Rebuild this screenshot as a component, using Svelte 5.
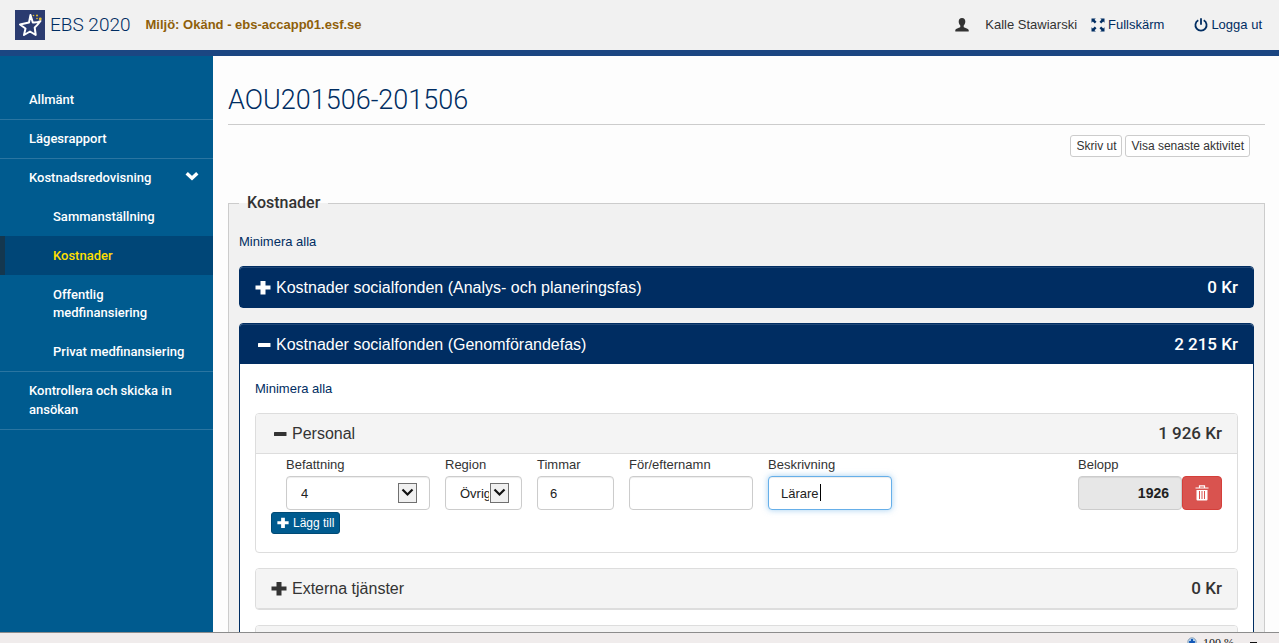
<script>
  const amounts = { analysis: '0 Kr', execution: '2 215 Kr', staff: '1 926 Kr', external: '0 Kr' };
  let position = $state('4');
  let region = $state('Övrigt');
  let hours = $state('6');
  let name = $state('');
  let description = $state('Lärare');
</script>

{#snippet plus()}
  <svg class="sign" viewBox="0 0 16 16" aria-hidden="true"><path d="M5.500 1h5v4.500H15.500v4H10.500V14.500h-5v-5H0.500v-4h5z" fill="currentColor" /></svg>
{/snippet}
{#snippet minus()}
  <svg class="sign" viewBox="0 0 16 16" aria-hidden="true"><rect x="3" y="6" width="12.500" height="4" rx=".5" fill="currentColor" /></svg>
{/snippet}
{#snippet arrow()}
  <svg class="arrow" viewBox="0 0 19 20" aria-hidden="true">
    <rect x=".5" y=".5" width="18" height="19" fill="#f0f0f0" stroke="#707070" />
    <path d="M4.500 6.500l5 5 5-5" fill="none" stroke="#111" stroke-width="2.200" />
  </svg>
{/snippet}

<div class="app">
  <header>
    <a class="brand" href="#start">
      <svg class="logo" viewBox="0 0 30 30" aria-hidden="true">
        <rect width="30" height="30" fill="#2b3b70" />
        <path d="M14 12.500L15.500 5l2.300 7.500q4.500.3 7.700-1.500-2.500 3.500-5.800 6.500l1 7.500-5.700-3.500L9 25l1.500-6.500L5 14.500z" fill="none" stroke="#fff" stroke-width="2" stroke-linejoin="round" />
        <g fill="#e8c22e"><circle cx="18.500" cy="5.500" r=".8" /><circle cx="22" cy="5.500" r="1" /><circle cx="25.300" cy="9" r="1.400" /><circle cx="22" cy="8.500" r=".8" /></g>
      </svg>
      <span>EBS 2020</span>
    </a>
    <strong class="env">Miljö: Okänd - ebs-accapp01.esf.se</strong>
    <div class="user">
      <svg class="person" viewBox="0 0 14 14" aria-hidden="true"><path d="M7 0c2.200 0 3.400 1.500 3.300 3.600 0 1.700-.7 3.200-1.600 4v1.500c0 .5 4.600 1.500 5 3V13.500H.3v-1.400c.4-1.500 5-2.500 5-3V7.600c-.9-.8-1.600-2.300-1.600-4C3.700 1.500 4.800 0 7 0z" fill="#333" /></svg>
      <span>Kalle Stawiarski</span>
    </div>
    <a class="tool full" href="#fullscreen">
      <svg viewBox="0 0 14 14" aria-hidden="true"><path d="M.5.500h4.300L3.500 1.800 5.500 3.800 3.800 5.500 1.800 3.500.500 4.800zM13.500.500v4.300l-1.300-1.300-2 2L8.500 3.800l2-2L9.200.500zM.500 13.500V9.200l1.300 1.300 2-2 1.700 1.700-2 2 1.300 1.300zM13.500 13.500H9.200l1.300-1.300-2-2 1.700-1.700 2 2 1.300-1.300z" fill="currentColor" /></svg>
      Fullskärm
    </a>
    <a class="tool" href="#logout">
      <svg viewBox="0 0 14 14" aria-hidden="true"><path d="M4.300 2.200a5.600 5.600 0 1 0 5.400 0" fill="none" stroke="currentColor" stroke-width="1.800" /><path d="M7 .3v6.500" stroke="currentColor" stroke-width="1.800" /></svg>
      Logga ut
    </a>
  </header>

  <div class="columns">
    <nav>
      <ul>
        <li><a href="#general">Allmänt</a></li>
        <li><a href="#report">Lägesrapport</a></li>
        <li>
          <a class="parent" href="#costs">
            Kostnadsredovisning
            <svg viewBox="0 0 14 10" aria-hidden="true"><path d="M1.700 2.200L7 7.200l5.300-5" fill="none" stroke="#fff" stroke-width="3.400" /></svg>
          </a>
          <ul class="sub">
            <li><a href="#summary">Sammanställning</a></li>
            <li><a class="active" href="#expenses">Kostnader</a></li>
            <li><a href="#public">Offentlig medfinansiering</a></li>
            <li><a href="#private">Privat medfinansiering</a></li>
          </ul>
        </li>
        <li><a href="#send">Kontrollera och skicka in ansökan</a></li>
      </ul>
    </nav>

    <main>
      <h1>AOU201506-201506</h1>
      <div class="actions">
        <button type="button">Skriv ut</button>
        <button type="button">Visa senaste aktivitet</button>
      </div>

      <fieldset>
        <legend>Kostnader</legend>
        <a class="collapse" href="#collapse">Minimera alla</a>

        <section class="phase">
          <h2>{@render plus()}<span>Kostnader socialfonden (Analys- och planeringsfas)</span><b>{amounts.analysis}</b></h2>
        </section>

        <section class="phase open">
          <h2>{@render minus()}<span>Kostnader socialfonden (Genomförandefas)</span><b>{amounts.execution}</b></h2>
          <div class="body">
            <a class="collapse" href="#collapse-phase">Minimera alla</a>

            <section class="group open">
              <h3>{@render minus()}<span>Personal</span><b>{amounts.staff}</b></h3>
              <form>
                <div class="fields">
                  <div class="field">
                    <label for="position">Befattning</label>
                    <div class="control">
                      <select id="position" bind:value={position}><option>4</option></select>
                      {@render arrow()}
                    </div>
                  </div>
                  <div class="field">
                    <label for="region">Region</label>
                    <div class="control">
                      <select id="region" bind:value={region}><option>Övrigt</option></select>
                      {@render arrow()}
                    </div>
                  </div>
                  <div class="field">
                    <label for="hours">Timmar</label>
                    <input id="hours" type="text" bind:value={hours} />
                  </div>
                  <div class="field">
                    <label for="name">För/efternamn</label>
                    <input id="name" type="text" bind:value={name} />
                  </div>
                  <div class="field">
                    <label for="description">Beskrivning</label>
                    <div class="control">
                      <input id="description" class="focused" type="text" bind:value={description} />
                      <i class="caret"></i>
                    </div>
                  </div>
                  <div class="field total">
                    <label for="amount">Belopp</label>
                    <div class="amount">
                      <input id="amount" type="text" value="1926" readonly />
                      <button class="delete" type="button" aria-label="Ta bort">
                        <svg viewBox="0 0 14 16" aria-hidden="true">
                          <path d="M4.500 2.500V.900h5v1.600M.500 3h13" fill="none" stroke="#fff" stroke-width="1.200" />
                          <path d="M1.500 5h11v9.500a1 1 0 0 1-1 1h-9a1 1 0 0 1-1-1z" fill="#fff" />
                          <path d="M4.500 6v8M7 6v8M9.500 6v8" stroke="#d9534f" stroke-width="1" />
                        </svg>
                      </button>
                    </div>
                  </div>
                </div>
                <button class="add" type="button">{@render plus()}Lägg till</button>
              </form>
            </section>

            <section class="group">
              <h3>{@render plus()}<span>Externa tjänster</span><b>{amounts.external}</b></h3>
            </section>
            <section class="group"><h3></h3></section>
          </div>
        </section>
      </fieldset>
    </main>
  </div>

  <footer>
    <svg viewBox="0 0 12 12" aria-hidden="true"><circle cx="6" cy="6" r="5" fill="#b9d6ef" stroke="#7a93ad" /><path d="M6 2.500v7M2.500 6h7" stroke="#1459b8" stroke-width="2.600" /></svg>
    <span>100 %</span>
    <i></i>
  </footer>
</div>

<style>
  :global(body) { margin: 0; }
  * { box-sizing: border-box; }
  .app {
    display: flex;
    flex-direction: column;
    height: 100vh;
    overflow: hidden;
    background: #fdfdfd;
    color: #333;
    font: 13px/18px "Liberation Sans", Arial, sans-serif;
  }
  a { color: #002d62; text-decoration: none; }
  ul { margin: 0; padding: 0; list-style: none; }
  svg { display: block; flex: none; }

  header {
    display: flex;
    flex: none;
    align-items: center;
    height: 56px;
    padding: 0 17px 0 15px;
    border-bottom: 6px solid #1b4682;
    background: #f1f1f1;
  }
  .brand {
    display: flex;
    align-items: center;
    gap: 5px;
    font: 300 19px/24px Roboto, sans-serif;
  }
  .logo { width: 30px; height: 30px; }
  .env { margin-left: 15px; color: #8f5f0a; }
  .user { display: flex; align-items: center; gap: 16px; margin-left: auto; }
  .tool { display: flex; align-items: center; gap: 3px; margin-left: 30px; }
  .tool.full { margin-left: 14px; }
  .user svg, .tool svg { width: 14px; height: 14px; }

  .columns { display: flex; flex: 1; min-height: 0; }
  nav { flex: none; width: 213px; padding-top: 25px; background: #005b8f; }
  nav > ul > li { border-bottom: 1px solid #2a75a1; }
  nav a {
    display: block;
    padding: 9px 20px 10px 29px;
    color: #fff;
    font: 500 13px/19px Roboto, sans-serif;
  }
  nav .parent { display: flex; justify-content: space-between; padding-right: 14px; }
  .parent svg { width: 14px; height: 10px; margin-top: 3px; }
  nav .sub a { padding: 11px 20px 10px 53px; line-height: 18px; }
  nav .sub a.active {
    padding-left: 48px;
    border-left: 5px solid #14374f;
    background: #004677;
    color: #ffdf00;
  }

  main { flex: 1; min-width: 0; padding: 27px 14px 0 15px; overflow: hidden; }
  h1 {
    margin: 0;
    padding-bottom: 7px;
    border-bottom: 1px solid #ccc;
    color: #002d62;
    font: 300 27px/34px Roboto, sans-serif;
  }
  .actions { display: flex; justify-content: flex-end; gap: 3px; padding: 10px 15px 0 0; }
  button { font: 12px/18px "Liberation Sans", Arial, sans-serif; }
  .actions button {
    height: 22px;
    padding: 0 5px;
    border: 1px solid #ccc;
    border-radius: 3px;
    background: #fff;
    color: #333;
  }

  fieldset {
    min-width: 0;
    margin: 36px 0 0;
    padding: 20px 10px 0;
    border: 1px solid #ccc;
    background: #f1f1f1;
  }
  legend { padding: 0 8px; font: 500 16px/20px Roboto, sans-serif; }
  .collapse { display: block; }
  .phase { margin-top: 15px; border: 1px solid #002d62; border-radius: 4px; background: #fff; }
  h2, h3 {
    display: flex;
    align-items: center;
    height: 40px;
    margin: 0;
    padding: 0 15px;
    font: 400 16px/20px "Liberation Sans", Arial, sans-serif;
  }
  h2 { border-top: 1px solid #1f4777; border-radius: 3px 3px 0 0; background: #002d62; color: #fff; }
  h2 b, h3 b { margin-left: auto; padding-bottom: 2px; font: 500 17px/20px Roboto, sans-serif; }
  .sign { width: 16px; height: 16px; margin-right: 5px; }
  .body { padding: 16px 15px 15px; }

  .group { margin-top: 15px; border: 1px solid #ddd; border-radius: 4px; background: #fff; }
  h3 { border-bottom: 1px solid #ddd; border-radius: 3px; background: #f4f4f4; }
  .open > h3 { border-radius: 3px 3px 0 0; }
  form { padding: 2px 15px 18px; }
  .fields {
    display: grid;
    grid-template-columns: 144fr 77fr 77fr 124fr 124fr 156fr 144fr;
    gap: 15px;
    padding-left: 15px;
  }
  .field { min-width: 0; }
  .total { grid-column: 7; }
  label { display: block; margin-bottom: 2px; line-height: 18px; }
  .control { position: relative; }
  input, select {
    display: block;
    width: 100%;
    height: 34px;
    padding: 6px 12px;
    border: 1px solid #ccc;
    border-radius: 4px;
    outline: 0;
    background: #fff;
    box-shadow: inset 0 1px 1px rgba(0, 0, 0, .075);
    color: #222;
    font: 13px/20px "Liberation Sans", Arial, sans-serif;
  }
  select { appearance: none; padding: 7px 32px 5px 14px; }
  .arrow { position: absolute; top: 7px; right: 13px; width: 19px; height: 20px; pointer-events: none; }
  .focused { border-color: #66afe9; box-shadow: inset 0 1px 1px rgba(0, 0, 0, .075), 0 0 6px rgba(102, 175, 233, .6); }
  .caret { position: absolute; top: 8px; left: 52px; width: 1px; height: 17px; background: #000; }
  .amount { display: flex; }
  .amount input { flex: 1; min-width: 0; background: #e7e7e7; font-size: 14px; font-weight: bold; text-align: right; }
  .delete {
    display: grid;
    flex: none;
    place-items: center;
    width: 40px;
    height: 34px;
    padding: 0;
    border: 1px solid #d43f3a;
    border-radius: 4px;
    background: #d9534f;
  }
  .delete svg { width: 14px; height: 16px; }
  .add {
    display: flex;
    align-items: center;
    height: 22px;
    margin-top: 2px;
    padding: 0 5px;
    border: 1px solid #004a75;
    border-radius: 3px;
    background: #005b8f;
    color: #fff;
  }
  .add .sign { width: 12px; height: 12px; margin-right: 4px; }

  footer {
    display: flex;
    flex: none;
    align-items: flex-start;
    justify-content: flex-end;
    gap: 6px;
    height: 11px;
    padding: 4px 22px 0 0;
    overflow: hidden;
    border-top: 1px solid #8c8c8c;
    background: #f0ecec;
    color: #111;
    font: 12px/12px "Liberation Serif", serif;
  }
  footer svg { width: 10px; height: 10px; }
  footer i { width: 7px; height: 2px; margin: 5px 0 0 10px; background: #111; }
</style>
